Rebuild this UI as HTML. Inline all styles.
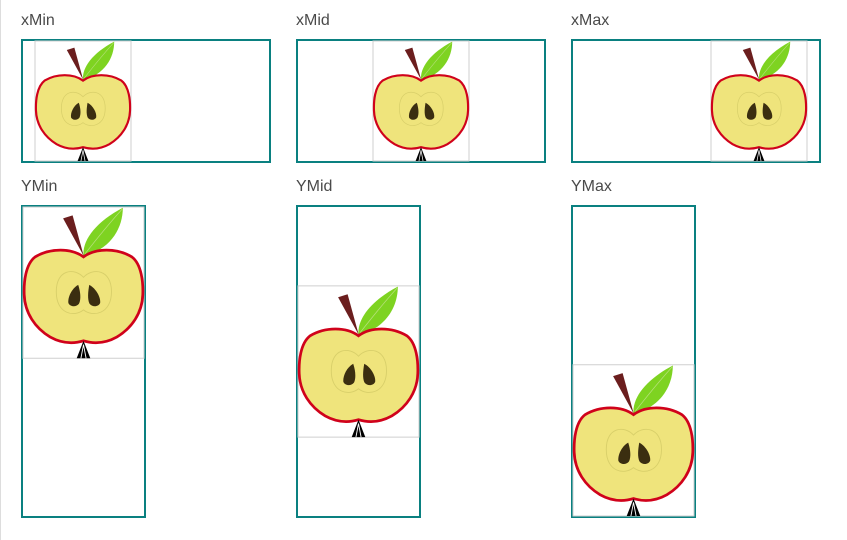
<!DOCTYPE html>
<html><head><meta charset="utf-8"><style>
html,body{margin:0;padding:0;background:#fff;}
body{width:847px;height:540px;position:relative;overflow:hidden;border-left:1px solid #ddd;box-sizing:border-box;}
.lbl{position:absolute;font-family:"Liberation Sans",sans-serif;font-size:16px;color:#4a4a4a;}
.box{position:absolute;border:2px solid #0a8080;box-sizing:border-box;}
.box svg{position:absolute;left:0;top:0;width:100%;height:100%;overflow:visible;}
.box.h svg{left:12px;width:calc(100% - 24px);}
</style></head><body>
<svg width="0" height="0" style="position:absolute">
<defs>
<g id="apple">
<rect x="0" y="0" width="80" height="100" fill="none" stroke="#cfcfcf" stroke-width="1" vector-effect="non-scaling-stroke"/>
<polygon points="26.5,7.5 32.8,5.5 40.2,32.5" fill="#6b1e1e"/>
<path d="M40,32.5 C39,22 48,10 66,0.5 C66,14 58,28 40,32.5Z" fill="#7ed321"/>
<path d="M41,31 C48,22 56,12 65.5,1.5" stroke="#b6e07a" stroke-width="0.5" fill="none"/>
<path d="M40,33 C32,27 18,27 8,33 C1.5,38 0.5,50 0.8,58 C1.2,70 8,80 18,86 C27,91 35,90 40,88.5 C45,90 53,91 62,86 C72,80 78.8,70 79.2,58 C79.5,50 78.5,38 72,33 C62,27 48,27 40,33Z" fill="#efe47c" stroke="#d0021b" stroke-width="1.8"/>
<path d="M40,46.5 C34,40 22,41 22,56 C22,71 34,73 40,68 C46,73 58.5,71 58.5,56 C58.5,41 46,40 40,46.5Z" fill="none" stroke="#d8cf6a" stroke-width="0.6"/>
<path d="M36.5,51.5 C32,54 29.5,60 30,63.5 C31,66 35,66.5 37,64 C38.5,61 38,56 36.5,51.5Z" fill="#3b2e10"/>
<path d="M43.8,51.5 C48.5,54 51.5,60 51,63.5 C50,66 46,66.5 44,64 C42.5,61 43,56 43.8,51.5Z" fill="#3b2e10"/>
<polygon points="40,88.5 35.5,100 44.5,100" fill="#000"/>
<path d="M40,91 L38.3,100 M40,91 L41.7,100" stroke="#fff" stroke-width="0.6"/>
</g>
</defs>
</svg>

<div class="lbl" style="left:20px;top:12px">xMin</div>
<div class="lbl" style="left:295px;top:12px">xMid</div>
<div class="lbl" style="left:570px;top:12px">xMax</div>
<div class="lbl" style="left:20px;top:178px">YMin</div>
<div class="lbl" style="left:295px;top:178px">YMid</div>
<div class="lbl" style="left:570px;top:178px">YMax</div>

<div class="box h" style="left:20px;top:39px;width:250px;height:124px"><svg viewBox="0 0 80 100" preserveAspectRatio="xMinYMid meet"><use href="#apple"/></svg></div>
<div class="box h" style="left:295px;top:39px;width:250px;height:124px"><svg viewBox="0 0 80 100" preserveAspectRatio="xMidYMid meet"><use href="#apple"/></svg></div>
<div class="box h" style="left:570px;top:39px;width:250px;height:124px"><svg viewBox="0 0 80 100" preserveAspectRatio="xMaxYMid meet"><use href="#apple"/></svg></div>

<div class="box" style="left:20px;top:205px;width:125px;height:313px"><svg viewBox="0 0 80 100" preserveAspectRatio="xMidYMin meet"><use href="#apple"/></svg></div>
<div class="box" style="left:295px;top:205px;width:125px;height:313px"><svg viewBox="0 0 80 100" preserveAspectRatio="xMidYMid meet"><use href="#apple"/></svg></div>
<div class="box" style="left:570px;top:205px;width:125px;height:313px"><svg viewBox="0 0 80 100" preserveAspectRatio="xMidYMax meet"><use href="#apple"/></svg></div>
</body></html>
